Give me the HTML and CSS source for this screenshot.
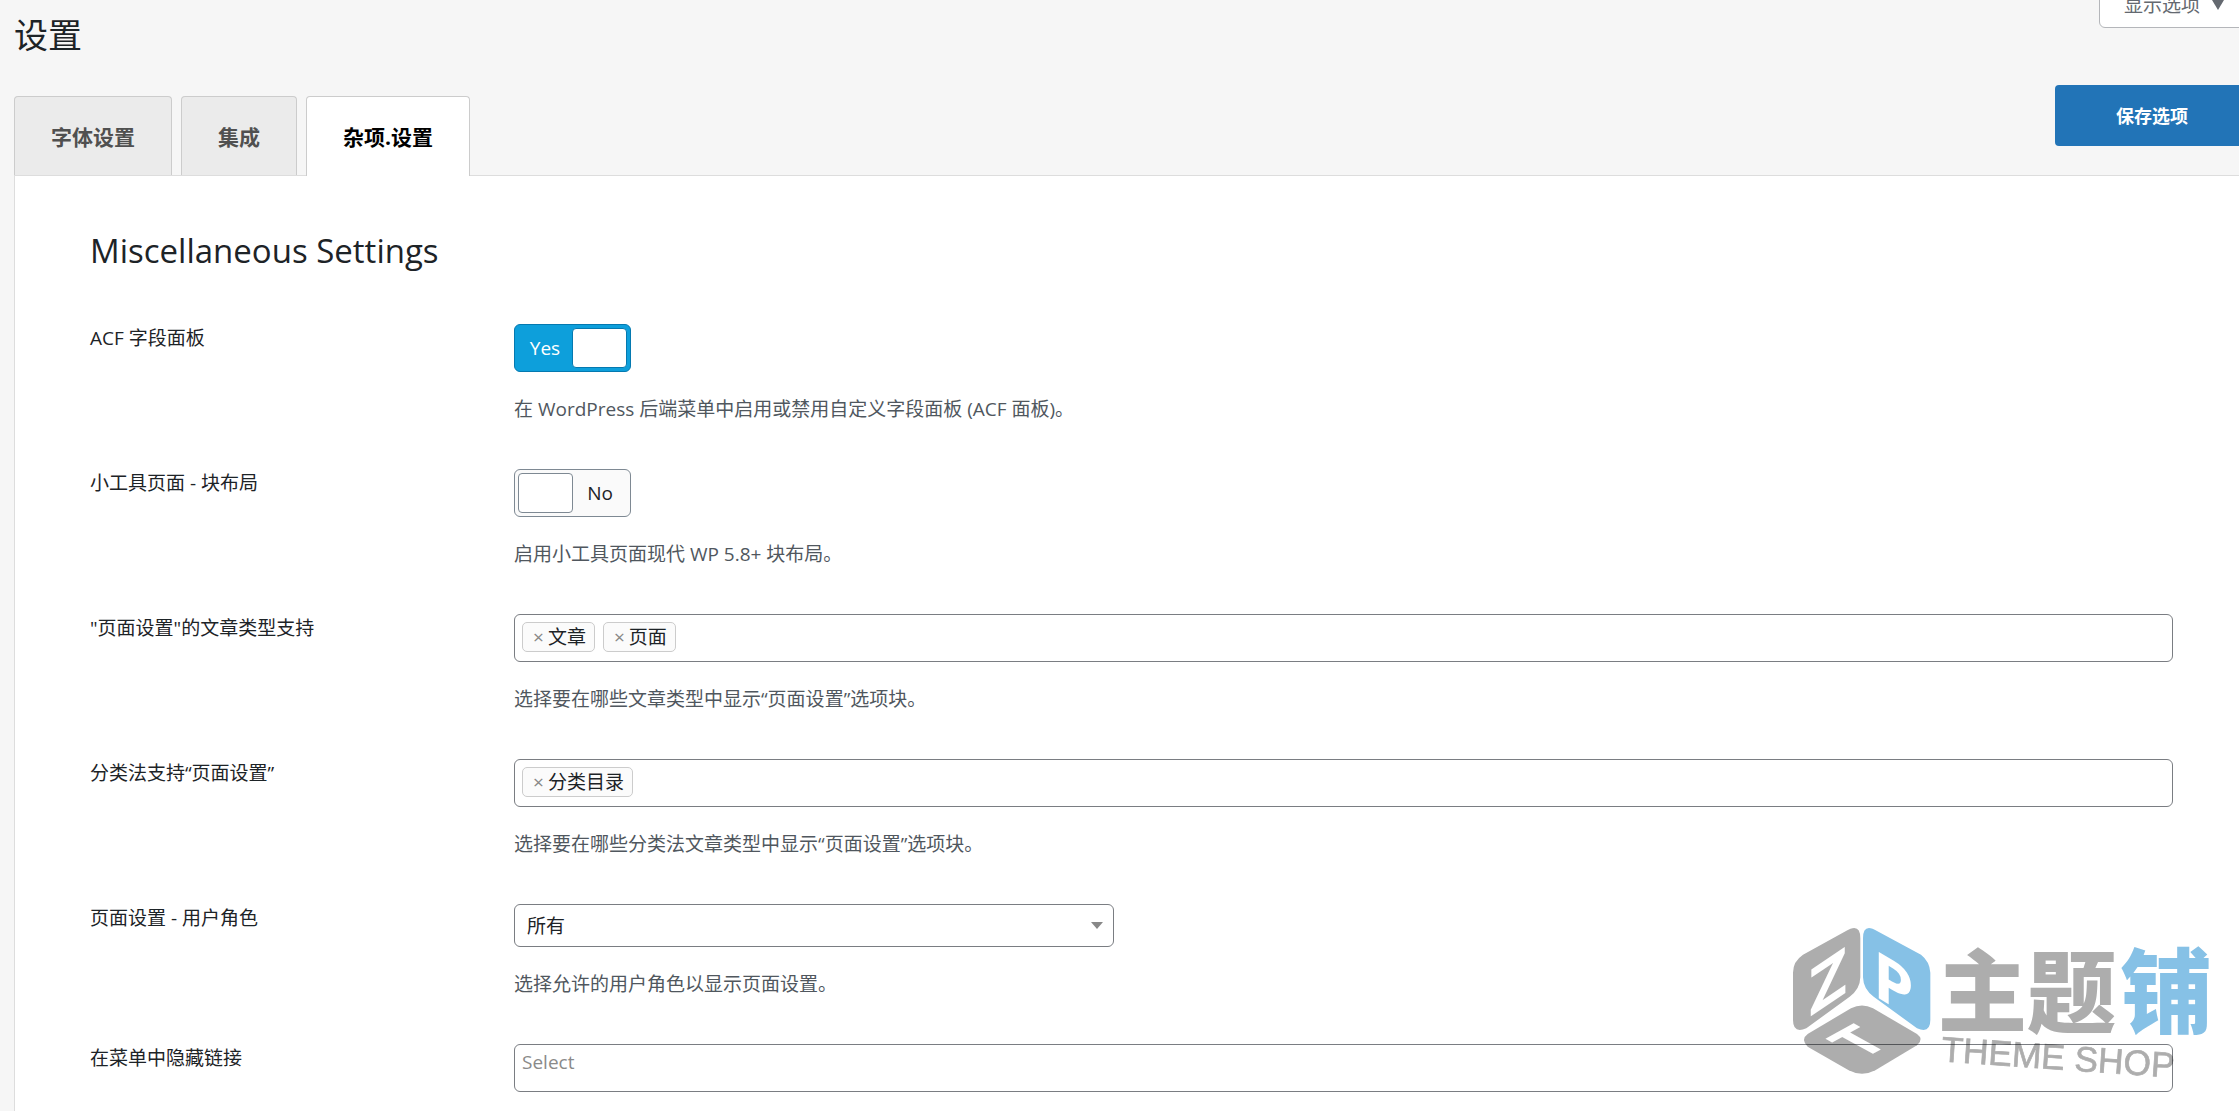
FILE: index.html
```html
<!DOCTYPE html>
<html lang="zh-CN">
  <head>
    <meta charset="UTF-8" />
    <meta name="viewport" content="width=device-width, initial-scale=1.0" />
    <title>设置</title>
    <link rel="stylesheet" href="styles.css" />
  </head>
  <body>
    <header class="page-header">
      <h1>设置</h1>
      <button type="button" class="screen-options">显示选项 <span class="caret"></span></button>
    </header>

    <div class="toolbar">
      <nav class="tabs">
        <a class="tab" href="#fonts">字体设置</a>
        <a class="tab" href="#integrations">集成</a>
        <a class="tab active" href="#misc">杂项.设置</a>
      </nav>
      <button type="submit" form="settingsForm" class="save">保存选项</button>
    </div>

    <main class="panel" id="misc">
      <h2>Miscellaneous Settings</h2>
      <form id="settingsForm">
        <div class="row">
          <label class="title" for="acf">ACF 字段面板</label>
          <div class="field">
            <label class="switch">
              <input type="checkbox" id="acf" name="acf" checked />
              <span class="text on">Yes</span>
              <span class="knob"></span>
              <span class="text off">No</span>
            </label>
            <p>在 WordPress 后端菜单中启用或禁用自定义字段面板 (ACF 面板)。</p>
          </div>
        </div>

        <div class="row">
          <label class="title" for="widgets">小工具页面 - 块布局</label>
          <div class="field">
            <label class="switch">
              <input type="checkbox" id="widgets" name="widgets" />
              <span class="text on">Yes</span>
              <span class="knob"></span>
              <span class="text off">No</span>
            </label>
            <p>启用小工具页面现代 WP 5.8+ 块布局。</p>
          </div>
        </div>

        <div class="row">
          <label class="title" for="postTypes">"页面设置"的文章类型支持</label>
          <div class="field">
            <div class="multi">
              <span class="tag"><button type="button" aria-label="移除文章">×</button>文章</span>
              <span class="tag"><button type="button" aria-label="移除页面">×</button>页面</span>
              <input type="text" id="postTypes" />
            </div>
            <p>选择要在哪些文章类型中显示“页面设置”选项块。</p>
          </div>
        </div>

        <div class="row">
          <label class="title" for="taxonomies">分类法支持“页面设置”</label>
          <div class="field">
            <div class="multi">
              <span class="tag"><button type="button" aria-label="移除分类目录">×</button>分类目录</span>
              <input type="text" id="taxonomies" />
            </div>
            <p>选择要在哪些分类法文章类型中显示“页面设置”选项块。</p>
          </div>
        </div>

        <div class="row">
          <label class="title" for="roles">页面设置 - 用户角色</label>
          <div class="field">
            <div class="select">
              <select id="roles" name="roles">
                <option>所有</option>
              </select>
            </div>
            <p>选择允许的用户角色以显示页面设置。</p>
          </div>
        </div>

        <div class="row">
          <label class="title" for="hideLinks">在菜单中隐藏链接</label>
          <div class="field">
            <div class="multi">
              <input type="text" id="hideLinks" placeholder="Select" />
            </div>
          </div>
        </div>
      </form>
    </main>

    <svg class="watermark" viewBox="0 0 1290 480" role="img" aria-label="主题铺 THEME SHOP">
      <g class="gray">
        <path d="M177 33Q220 8 220 55V172Q219 208 188 230L58 325Q18 342 18 300V158Q18 124 48 104Z" />
        <path d="M192 265Q225 248 258 265L390 342Q412 358 390 376L265 451Q225 472 185 451L62 380Q40 358 62 342Z" />
      </g>
      <path class="blue" d="M270 33Q228 8 228 55V172Q229 208 260 230L390 325Q430 342 430 300V158Q428 124 402 104Z" />
      <text class="cube" transform="translate(67 292) skewY(-34)" font-size="195">Z</text>
      <text class="cube" transform="translate(258 224) skewY(31)" font-size="195">P</text>
      <text class="cube" transform="matrix(0.87 -0.48 0.87 0.48 224 420)" font-size="180">T</text>
      <text class="name gray" x="452" y="316" font-size="268">主</text>
      <text class="name gray" x="720" y="318" font-size="268">题</text>
      <text class="name blue" x="1000" y="318" font-size="276">铺</text>
      <text class="latin gray" transform="translate(461 424) rotate(4)" font-size="106">THEME SHOP</text>
    </svg>
  </body>
</html>
```
FILE: styles.css
```css
* {
  box-sizing: border-box;
}
body {
  display: flex;
  flex-direction: column;
  min-height: 100vh;
  margin: 0;
  padding-left: 14px;
  overflow: hidden;
  background: #f6f6f6;
  color: #1d2327;
  font-family: "Open Sans", "Noto Sans CJK SC", sans-serif;
  font-size: 19px;
  line-height: 28px;
}
button,
input,
select {
  font: inherit;
  color: inherit;
}
h1,
h2,
p {
  margin: 0;
  font-weight: 400;
}

/* header */
.page-header {
  display: flex;
  justify-content: space-between;
  align-items: flex-start;
  height: 85px;
}
h1 {
  padding-top: 12px;
  font-size: 34px;
  line-height: 46px;
}
.screen-options {
  display: flex;
  align-items: center;
  gap: 12px;
  height: 46px;
  margin-top: -18px;
  margin-right: -12px;
  padding: 0 26px 0 24px;
  border: 1px solid #b4b6ba;
  border-radius: 0 0 6px 6px;
  background: #fff;
  color: #646970;
}
.caret {
  border: 6px solid transparent;
  border-top: 10px solid #646970;
  border-bottom: 0;
}

/* tabs */
.toolbar {
  display: flex;
  justify-content: space-between;
  align-items: flex-start;
  height: 90px;
}
.tabs {
  display: flex;
  gap: 9px;
  padding-top: 11px;
}
.tab {
  height: 79px;
  padding: 0 36px;
  border: 1px solid #ccc;
  border-bottom: 0;
  border-radius: 4px 4px 0 0;
  background: #ebebeb;
  color: #505050;
  font-size: 21px;
  font-weight: 700;
  line-height: 80px;
  text-decoration: none;
}
.tab.active {
  height: 80px;
  background: #fff;
  color: #000;
  z-index: 1;
}
.save {
  width: 194px;
  height: 61px;
  margin-right: -10px;
  border: 0;
  border-radius: 4px;
  background: #2274b7;
  color: #fff;
  font-size: 18px;
  font-weight: 700;
}

/* panel */
.panel {
  flex: 1;
  padding: 50px 66px 17px 75px;
  border: 1px solid #ddd;
  border-right: 0;
  border-bottom: 0;
  background: #fff;
}
h2 {
  margin-bottom: 48px;
  font-size: 33px;
  line-height: 50px;
}
.row {
  display: grid;
  grid-template-columns: 424px 1fr;
  margin-bottom: 46px;
}
.row:last-child {
  margin-bottom: 0;
}
.field p {
  margin-top: 23px;
  color: #50575e;
}

.switch {
  position: relative;
  display: flex;
  align-items: center;
  width: 117px;
  height: 48px;
  padding: 3px;
  border: 1px solid #7e8993;
  border-radius: 6px;
  background: #fafafa;
}
.switch input {
  position: absolute;
  opacity: 0;
}
.switch .text {
  flex: 1;
  text-align: center;
}
.switch .on {
  display: none;
}
.knob {
  width: 55px;
  height: 40px;
  border: 1px solid #7e8993;
  border-radius: 4px;
  background: #fff;
}
.switch:has(:checked) {
  border-color: #0479b0;
  background: #0d9fdb;
  color: #fff;
}
.switch:has(:checked) .on {
  display: block;
}
.switch:has(:checked) .off {
  display: none;
}
.switch:has(:checked) .knob {
  border-color: #0479b0;
}

.multi {
  display: flex;
  align-items: flex-start;
  gap: 8px;
  height: 48px;
  padding: 7px;
  border: 1px solid #7a7d82;
  border-radius: 6px;
}
.multi input {
  flex: 1;
  height: 20px;
  padding: 0;
  border: 0;
  outline: 0;
  background: none;
}
.multi input::placeholder {
  color: #8a8a8a;
  opacity: 1;
}
.tag {
  display: flex;
  align-items: center;
  gap: 4px;
  height: 30px;
  padding: 0 8px 0 10px;
  border: 1px solid #ccc;
  border-radius: 5px;
  background: #fbfbfb;
}
.tag button {
  padding: 0;
  border: 0;
  background: none;
  color: #888;
}

.select {
  position: relative;
  max-width: 600px;
}
.select select {
  display: block;
  width: 100%;
  height: 43px;
  padding: 0 12px;
  border: 1px solid #7a7d82;
  border-radius: 6px;
  background: #fff;
  appearance: none;
}
.select::after {
  content: "";
  position: absolute;
  top: 18px;
  right: 11px;
  border: 6px solid transparent;
  border-top: 7px solid #888;
  border-bottom: 0;
}

/* watermark over the page corner */
.watermark {
  position: fixed;
  right: 22px;
  bottom: 31px;
  width: 430px;
  mix-blend-mode: multiply;
  pointer-events: none;
}
.gray {
  fill: #adadad;
}
.blue {
  fill: #86c1e6;
}
.cube {
  fill: #fff;
  font-family: "Open Sans", sans-serif;
  font-weight: 700;
}
.name {
  font-family: "Noto Sans CJK SC", sans-serif;
  font-weight: 900;
}
.latin {
  font-family: "Liberation Sans", sans-serif;
  stroke: #adadad;
  stroke-width: 2;
}
```
